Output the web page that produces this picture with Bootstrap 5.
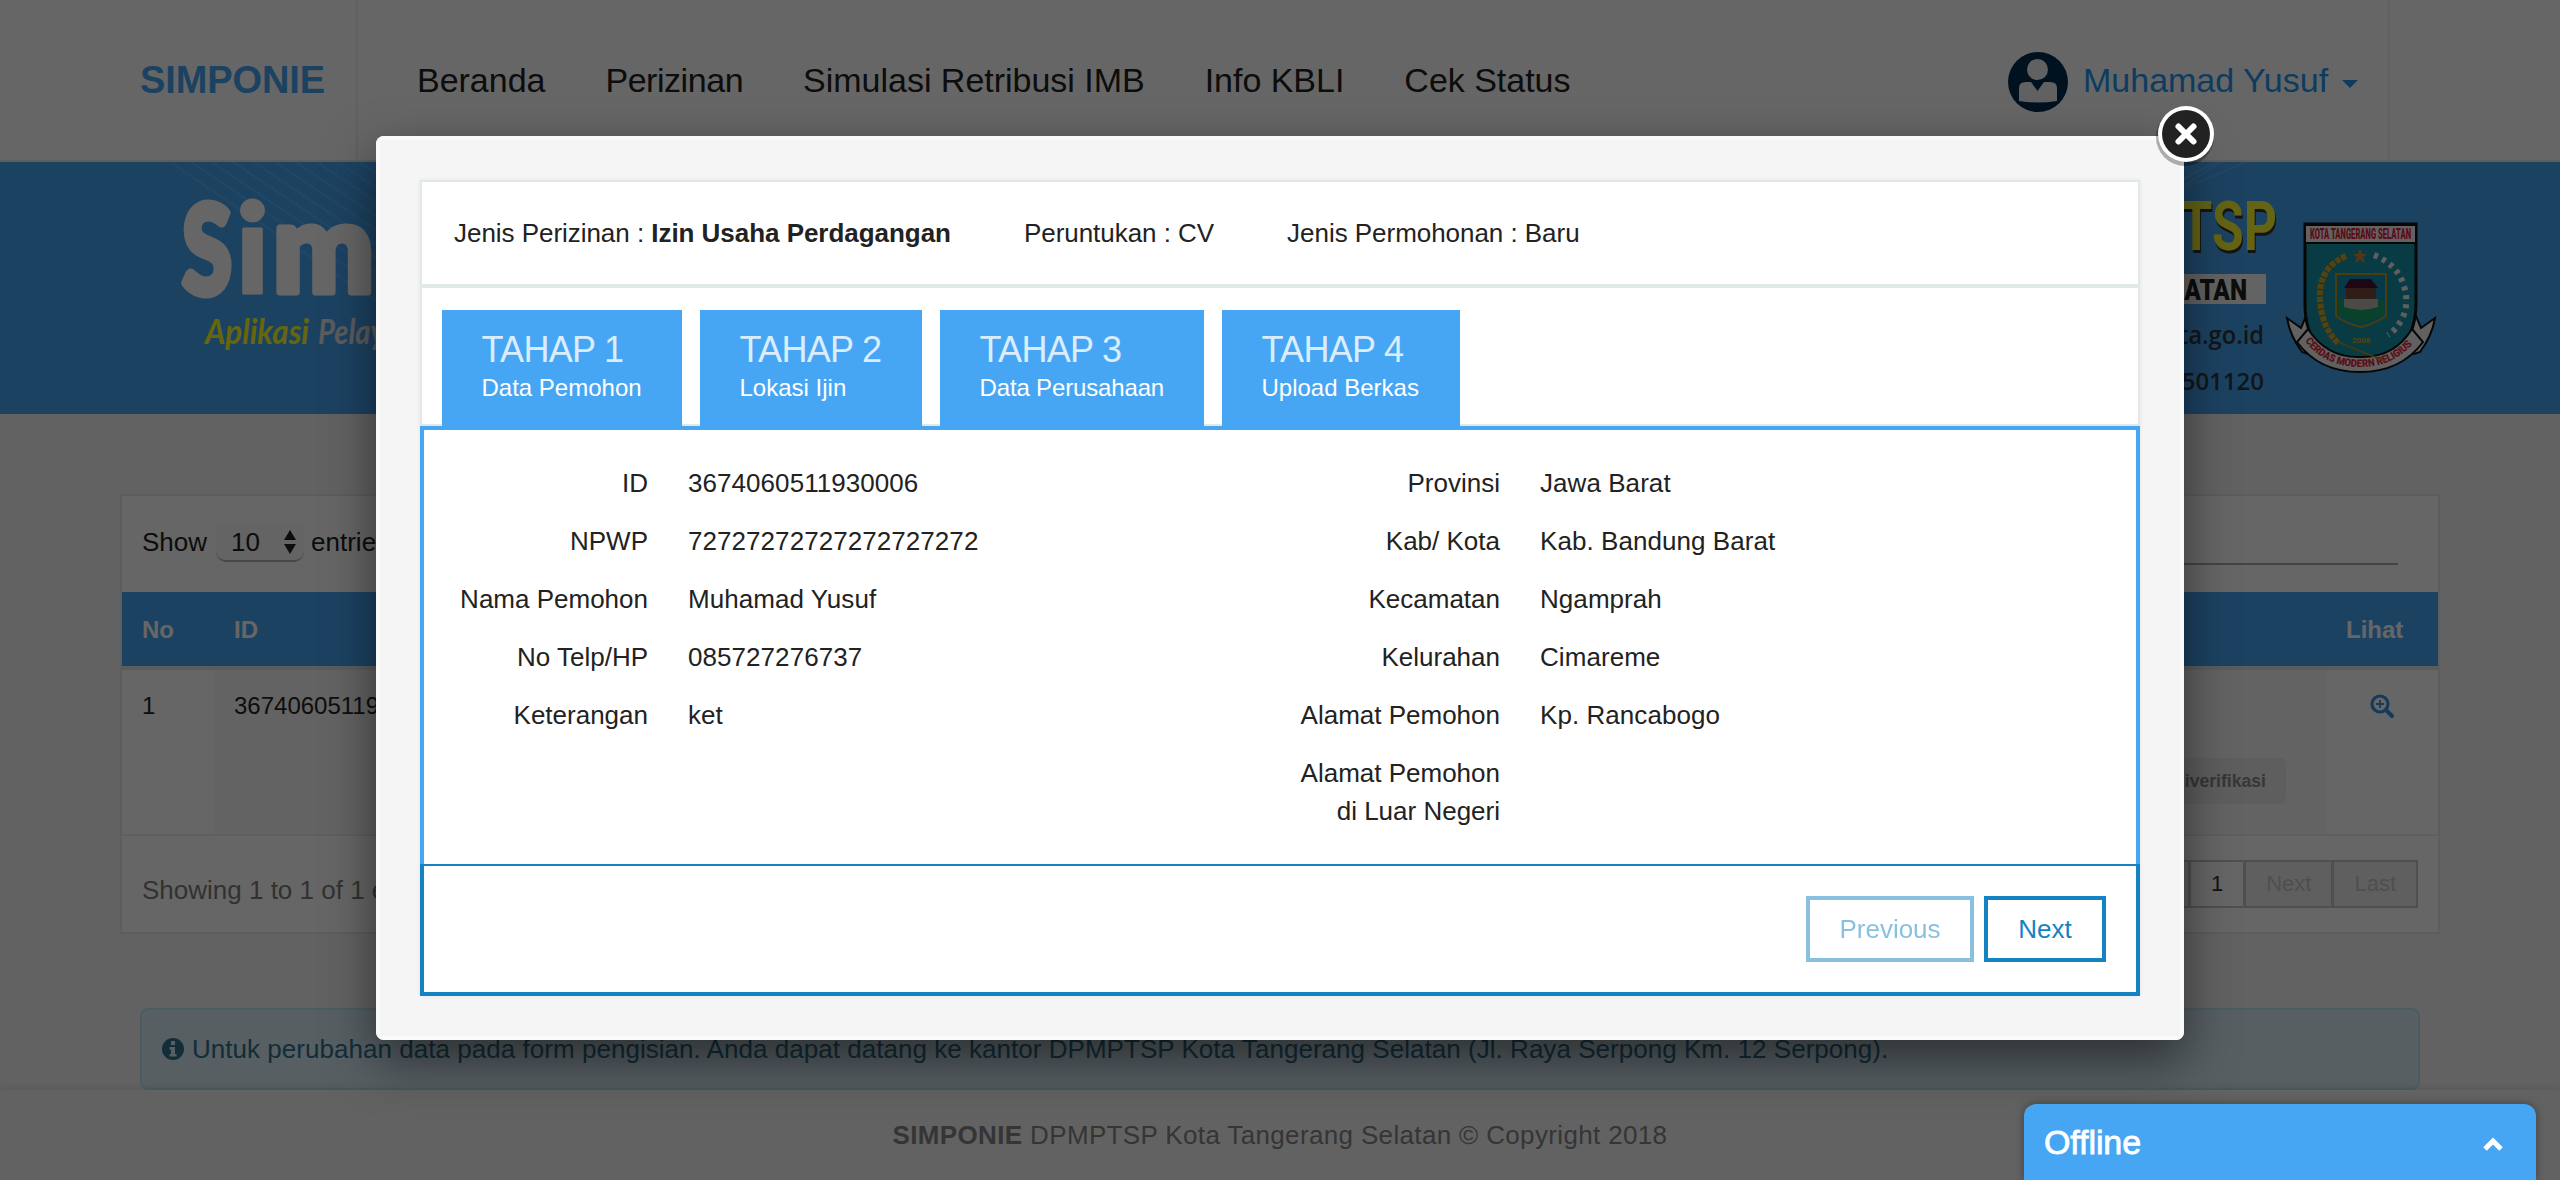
<!DOCTYPE html>
<html lang="id">
<head>
<meta charset="utf-8">
<title>SIMPONIE</title>
<link href="https://cdn.jsdelivr.net/npm/bootstrap@5.3.0/dist/css/bootstrap.min.css" rel="stylesheet">
<style>
:root{--sky:#47a6f4;--deep:#1583c3;--line:#e1e9e8}
html,body{height:1180px;overflow:hidden}
body{font-family:"Liberation Sans",Arial,sans-serif;font-size:26px;line-height:38px;color:#222;background:#f5f5f5}
.topnav{height:162px;background:#fff;border-bottom:2px solid #e7eae4}
.brandcell{width:358px;border-right:2px solid #efefef;padding-left:140px}
.brandcell a{font-size:38px;font-weight:700;color:var(--sky);letter-spacing:-.1px}
.menu{padding-left:29px;font-size:34px;letter-spacing:-.02px}
.menu .nav-link{padding:0 30px;color:#222}
.menu .tight{letter-spacing:-.45px}
.usercell{width:382px;border-right:2px solid #efefef;font-size:34px;color:#2596f0;margin-right:170px}
.usercell .who{margin-left:15px;white-space:nowrap}
.downcaret{border:8px solid transparent;border-top-color:#2596f0;border-bottom:0;margin-left:14px;margin-top:8px}
.banner{height:252px;background:var(--sky);display:block;width:100%}
.banner .depth{filter:drop-shadow(1px 3px 0 #333)}
.listcard{margin:80px 120px 0;height:440px;border:2px solid #e8e8e8;border-radius:0;background:#fff}
.toolbar{height:96px;padding:0 40px 0 20px}
.toolbar .word{margin-top:-4px}
.pagesize{width:88px;height:38px;border-radius:10px;background:#f9f9f9;border-bottom:2px solid #b5b5b5;margin:-2px 7px 0 9px;padding:0 8px 0 15px;line-height:34px}
.search{width:700px;height:36px;border-bottom:2px solid #aaa;margin-top:5px}
.datatable{font-size:24px;line-height:34px;margin:0;table-layout:fixed;border-collapse:separate;border-spacing:0}
.datatable th{background:var(--sky)!important;color:#fff;padding:2px 20px 0;height:78px;vertical-align:middle;border-bottom:4px solid #dfe9e6}
.datatable td{padding:19px 20px 0;height:166px;vertical-align:top;border-bottom:2px solid #eee}
.datatable td svg{margin-top:-4px}
.datatable td.mid{background:#f7f7f7}
.state{font-size:17.6px;height:46px;border-radius:6px;background:#eaeaea;color:#8b8b8b;padding:0 20px;line-height:46px;font-weight:700;margin-top:35px;margin-right:20px}
.pager .page-link{font-size:22px;height:48px;line-height:44px;padding:0 20px;border:2px solid #c6c6c6;color:#c6c6c6;background:#eee;border-radius:0!important;margin-left:-2px}
.pager .active .page-link{background:#fff;color:#333;border-color:#c6c6c6}
.cardfoot{padding:0 20px;height:96px;color:#7d7d7d}
.cardfoot .info{padding-top:11px}
.note{margin:74px 140px 0;height:82px;padding:0 20px;border:2px solid #bce8f1;border-radius:8px;background:#d9edf7;color:#31708f;letter-spacing:.035px}
.foot{left:0;right:0;bottom:0;height:90px;background:#f5f5f5;color:#868686;box-shadow:0 -2px 8px rgba(0,0,0,.1);letter-spacing:.35px}
.shade{inset:0;background:rgba(0,0,0,.6);z-index:20}
.popup{left:376px;top:136px;width:1808px;height:904px;z-index:30;background:#f5f5f5;border-radius:8px;padding:44px;box-shadow:0 20px 50px rgba(0,0,0,.5),inset 0 0 0 4px #fafafa}
.closer{right:-32px;top:-32px}
.panel{background:#fff;box-shadow:0 0 4px rgba(0,0,0,.07)}
.summary{height:106px;border:2px solid var(--line);padding:0 32px;gap:73px;letter-spacing:-.04px}
.steps{height:140px;border:2px solid var(--line);border-bottom:2px solid var(--line);padding:22px 20px 0;gap:18px}
.steps .nav-link{background:var(--sky);border:0;border-radius:0;height:116px;padding:20px 0 20px 39.500px;color:#fff;font-size:24px;line-height:36px;white-space:nowrap}
.steps .w1{width:240px}.steps .w2{width:222px}.steps .w3{width:264px}.steps .w4{width:238px}
.steps .w3{letter-spacing:-.15px}
.steps .big{display:block;font-size:36px;line-height:40px;color:#daedfd;letter-spacing:-.72px}
.datapane{height:438px;border:4px solid var(--sky);border-bottom:0;padding:34px 0 0}
.datapane .half{width:852px}
.fld{display:flex;margin-bottom:20px}
.fld dt{width:224px;text-align:right;font-weight:400;margin-right:40px}
.fld dd{margin:0;letter-spacing:.06px}
.actions{height:132px;border:4px solid var(--deep);border-top-width:2px;padding:0 30px 0 0;gap:10px}
.actions .btn{height:66px;border:4px solid var(--deep);color:var(--deep);border-radius:0;font-size:26px;line-height:36px;padding:11px 0;width:122px;background:#fff}
.actions .btn.prev{width:168px}
.chat{right:24px;bottom:0;width:512px;height:76px;z-index:40;background:var(--sky);border-radius:12px 12px 0 0;color:#fff;padding:0 32px 0 20px;box-shadow:0 0 8px rgba(0,0,0,.35)}
.chat .label{font-size:34px;letter-spacing:-.1px;-webkit-text-stroke:.8px #fff}
</style>
<script src="https://cdn.jsdelivr.net/npm/bootstrap@5.3.0/dist/js/bootstrap.bundle.min.js"></script>
</head>
<body class="position-relative">
<nav class="topnav d-flex align-items-stretch">
  <div class="brandcell d-flex align-items-center flex-shrink-0"><a class="text-decoration-none">SIMPONIE</a></div>
  <ul class="menu nav align-items-center flex-nowrap flex-grow-1">
    <li class="nav-item"><a class="nav-link">Beranda</a></li>
    <li class="nav-item"><a class="nav-link tight">Perizinan</a></li>
    <li class="nav-item"><a class="nav-link">Simulasi Retribusi IMB</a></li>
    <li class="nav-item"><a class="nav-link">Info KBLI</a></li>
    <li class="nav-item"><a class="nav-link">Cek Status</a></li>
  </ul>
  <div class="usercell d-flex align-items-center flex-shrink-0">
    <svg class="flex-shrink-0 mt-1" width="60" height="60" viewBox="0 0 60 60"><circle cx="30" cy="30" r="30" fill="#002b50"/><circle cx="29.500" cy="17.500" r="10.500" fill="#f2f2f2"/><path d="M11 49V36q0-6 7-6h5l6.500 9 6.500-9h6q7 0 7 6v13q-19 3-38 0z" fill="#f2f2f2"/></svg>
    <span class="who">Muhamad Yusuf</span><span class="downcaret"></span>
  </div>
</nav>
<svg class="banner" viewBox="0 0 2560 252">
  <g stroke="#fff" stroke-width="2" opacity=".09">
    <path d="M170 0l240 162M191 0l220 148M212 0l200 135M233 0l180 121M254 0l160 108M275 0l140 94M296 0l120 81M317 0l100 67M338 0l80 54M359 0l60 40M2160 40l60-40M2170 24l46-24M2184 26l62-26"/>
  </g>
  <g fill="#fff" stroke="#fff" stroke-linejoin="round" font-family="Lato" font-weight="900" font-size="124">
    <text x="182" y="132" textLength="50" lengthAdjust="spacingAndGlyphs" stroke-width="7">S</text>
    <text x="236" y="131" textLength="33" lengthAdjust="spacingAndGlyphs" stroke-width="3">i</text>
    <text x="273" y="130" textLength="101" lengthAdjust="spacingAndGlyphs" stroke-width="7">m</text>
  </g>
  <g font-family="Lato" font-style="italic" font-size="34" font-weight="700">
    <text x="205" y="182" textLength="104" lengthAdjust="spacingAndGlyphs" fill="#ffff1e">Aplikasi</text>
    <text x="318" y="182" textLength="128" lengthAdjust="spacingAndGlyphs" fill="#e6e6e6">Pelayanan</text>
  </g>
  <text class="depth" x="2035" y="88" textLength="242" lengthAdjust="spacingAndGlyphs" font-family="Roboto" font-weight="700" font-size="68" fill="#fbf932">DPMPTSP</text>
  <rect x="2100" y="112" width="166" height="30" fill="#f7f7f7"/>
  <text x="2142" y="138" font-family="Roboto" font-weight="900" font-size="30" textLength="105" fill="#222" lengthAdjust="spacingAndGlyphs">SELATAN</text>
  <g font-family="Open Sans" font-weight="600" fill="#30373d" text-anchor="end">
    <text x="2264" y="182" font-size="26" textLength="196" lengthAdjust="spacingAndGlyphs">tangselkota.go.id</text>
    <text x="2264" y="228" font-size="24">7501120</text>
  </g>
  <g stroke="#111" stroke-width="2">
    <path d="M2287 156l14 10 5-12 8 22 14 4-20 12-6-2q-12-16-15-34zM2435 156l-14 10-5-12-8 22-14 4 20 12 6-2q12-16 15-34z" fill="#f2f2f2"/>
    <path d="M2305 62h111v78q0 58-56 58t-55-58z" fill="#1595a9" stroke-width="3"/>
    <path d="M2305 63h111v18h-111z" fill="#f4f4f4"/>
    <path d="M2308 167q19 29 52 28 34 1 52-28l11 13q-22 30-63 30t-63-30z" fill="#f2f2f2"/>
  </g>
  <text x="2310" y="77" font-family="Roboto" font-weight="900" font-size="15" textLength="101" lengthAdjust="spacingAndGlyphs" fill="#e02238">KOTA TANGERANG SELATAN</text>
  <path id="motto" d="M2305 179q20 26 55 26 35 0 56-27" fill="none"/>
  <text font-family="Roboto" font-weight="900" font-size="10.500" fill="#e02238"><textPath href="#motto" textLength="122" lengthAdjust="spacingAndGlyphs">CERDAS MODERN RELIGIUS</textPath></text>
  <path d="M2346 94q-28 12-26 43 1 27 18 44" fill="none" stroke="#dba31a" stroke-width="6" stroke-dasharray="5 1.500"/>
  <path d="M2338 180l22 9 25 10" fill="none" stroke="#b99017" stroke-width="1.500"/>
  <path d="M2374 93q22 9 29 28 7 20-1 36-6 11-14 16" fill="none" stroke="#eee" stroke-width="6" stroke-dasharray="4 5"/>
  <path d="M2360 87l2 5h5l-4 3 2 6-5-3-5 3 2-6-4-3h5z" fill="#d9873c"/>
  <path d="M2336 112h50v42q-10 7-25 11-16-4-25-11z" fill="#168fb5" stroke="#bd9b1b" stroke-width="2"/>
  <path d="M2338 138h46v15l-23 9-23-9z" fill="#18a46c"/>
  <path d="M2350 117h21l7 9h-34z" fill="#4a1230"/><path d="M2346 126h30v11h-30z" fill="#7a4a3a"/><path d="M2344 137h34v8q-17 6-34 0z" fill="#b9b9b0"/>
  <text x="2352" y="181" font-size="8" font-weight="700" font-family="Roboto" fill="#d9a41a">2008</text>
</svg>
<main>
  <div class="listcard card">
    <div class="toolbar d-flex align-items-center">
      <span class="word">Show</span>
      <span class="pagesize d-flex justify-content-between align-items-center">10<svg width="12" height="24" viewBox="0 0 12 24"><path d="M0 10L6 0l6 10zM0 14l6 10 6-10z" fill="#222"/></svg></span>
      <span class="word">entries</span>
      <span class="search ms-auto"></span>
    </div>
    <table class="datatable table table-borderless">
      <colgroup><col style="width:92px"><col><col style="width:112px"></colgroup>
      <thead><tr><th>No</th><th>ID</th><th>Lihat</th></tr></thead>
      <tbody><tr><td>1</td>
        <td class="mid"><div class="d-flex flex-column"><span>3674060511930006</span><span class="state align-self-end">Belum diverifikasi</span></div></td>
        <td class="text-center"><svg width="24" height="24" viewBox="0 0 24 24" fill="none" stroke="#3691e2"><circle cx="10" cy="10" r="8" stroke-width="3.200"/><path d="M16 16l6 6" stroke-width="4" stroke-linecap="round"/><path d="M10 6v8M6 10h8" stroke-width="1.800"/></svg></td></tr></tbody>
    </table>
    <div class="cardfoot d-flex align-items-center justify-content-between">
      <span class="info">Showing 1 to 1 of 1 entries</span>
      <ul class="pager pagination m-0">
        <li class="page-item disabled"><a class="page-link">First</a></li>
        <li class="page-item disabled"><a class="page-link">Previous</a></li>
        <li class="page-item active"><a class="page-link">1</a></li>
        <li class="page-item disabled"><a class="page-link">Next</a></li>
        <li class="page-item disabled"><a class="page-link">Last</a></li>
      </ul>
    </div>
  </div>
  <div class="note alert d-flex align-items-center">
    <svg width="22" height="22" viewBox="0 0 22 22" class="me-2"><circle cx="11" cy="11" r="11" fill="#31708f"/><path d="M9 3h4v4H9zM7.500 9H13v7h1.500v2.500h-7V16H9v-4.500H7.500z" fill="#d9edf7"/></svg>
    <span>Untuk perubahan data pada form pengisian. Anda dapat datang ke kantor DPMPTSP Kota Tangerang Selatan (Jl. Raya Serpong Km. 12 Serpong).</span>
  </div>
</main>
<footer class="foot position-absolute d-flex align-items-center justify-content-center"><span><b>SIMPONIE</b> DPMPTSP Kota Tangerang Selatan © Copyright 2018</span></footer>
<div class="shade position-absolute"></div>
<div class="popup position-absolute">
  <svg class="closer position-absolute" width="60" height="64" viewBox="0 0 60 64" overflow="visible"><circle cx="29" cy="33" r="29" fill="#000" opacity=".3"/><circle cx="30" cy="30" r="28" fill="#fff"/><circle cx="30" cy="30" r="24" fill="#222"/><path d="M22.500 22.500l15 15M37.500 22.500l-15 15" stroke="#fff" stroke-width="6" stroke-linecap="round"/></svg>
  <div class="panel">
    <div class="summary d-flex align-items-center"><span>Jenis Perizinan : <b>Izin Usaha Perdagangan</b></span><span>Peruntukan : CV</span><span>Jenis Permohonan : Baru</span></div>
    <div class="steps nav flex-nowrap">
      <a class="nav-link w1"><span class="big">TAHAP 1</span>Data Pemohon</a>
      <a class="nav-link w2"><span class="big">TAHAP 2</span>Lokasi Ijin</a>
      <a class="nav-link w3"><span class="big">TAHAP 3</span>Data Perusahaan</a>
      <a class="nav-link w4"><span class="big">TAHAP 4</span>Upload Berkas</a>
    </div>
    <div class="datapane d-flex">
      <dl class="half mb-0">
        <div class="fld"><dt>ID</dt><dd>3674060511930006</dd></div>
        <div class="fld"><dt>NPWP</dt><dd>72727272727272727272</dd></div>
        <div class="fld"><dt>Nama Pemohon</dt><dd>Muhamad Yusuf</dd></div>
        <div class="fld"><dt>No Telp/HP</dt><dd>085727276737</dd></div>
        <div class="fld"><dt>Keterangan</dt><dd>ket</dd></div>
      </dl>
      <dl class="half mb-0">
        <div class="fld"><dt>Provinsi</dt><dd>Jawa Barat</dd></div>
        <div class="fld"><dt>Kab/ Kota</dt><dd>Kab. Bandung Barat</dd></div>
        <div class="fld"><dt>Kecamatan</dt><dd>Ngamprah</dd></div>
        <div class="fld"><dt>Kelurahan</dt><dd>Cimareme</dd></div>
        <div class="fld"><dt>Alamat Pemohon</dt><dd>Kp. Rancabogo</dd></div>
        <div class="fld"><dt>Alamat Pemohon<br>di Luar Negeri</dt><dd></dd></div>
      </dl>
    </div>
    <div class="actions d-flex align-items-center justify-content-end"><button class="btn prev opacity-50">Previous</button><button class="btn">Next</button></div>
  </div>
</div>
<div class="chat position-absolute d-flex align-items-center justify-content-between"><span class="label">Offline</span><svg width="22" height="16" viewBox="0 0 22 16" class="mt-1"><path d="M3 13l8-8 8 8" fill="none" stroke="#fff" stroke-width="5"/></svg></div>
</body>
</html>
